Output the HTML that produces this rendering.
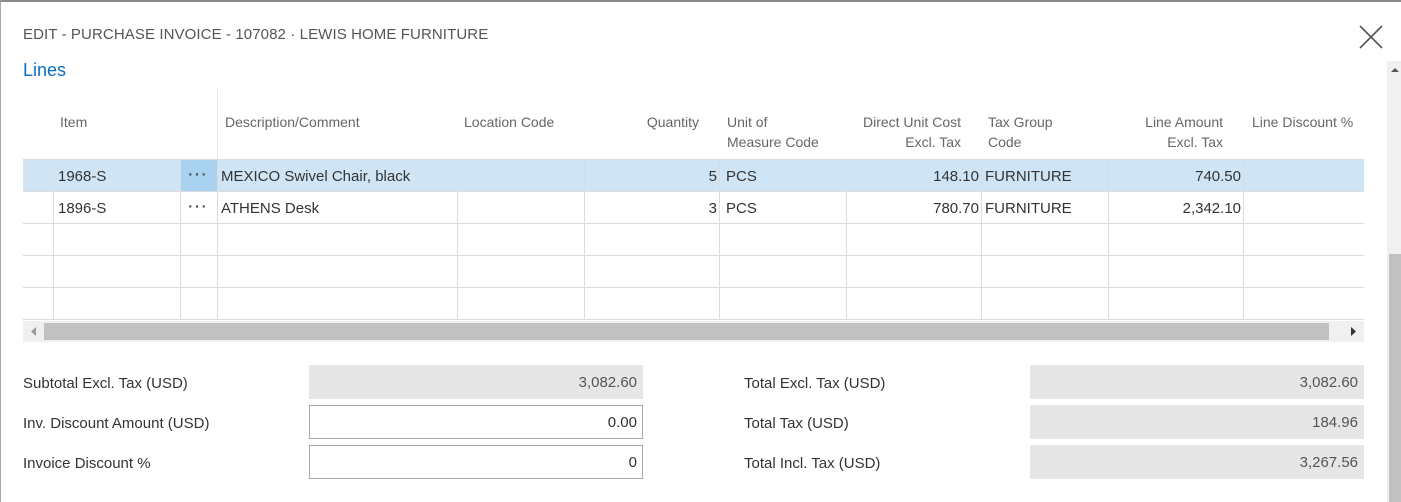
<!DOCTYPE html>
<html><head><style>
*{margin:0;padding:0;box-sizing:border-box}
body{width:1401px;height:502px;overflow:hidden;background:#fff;font-family:"Liberation Sans",sans-serif;color:#333;position:relative}
.frame{position:absolute;left:0;top:0;width:1401px;height:502px;border-top:2px solid #8a8a8a;border-left:1px solid #aaa}
.abs{position:absolute}
.title{left:23px;top:26px;font-size:15px;color:#555;letter-spacing:0.1px}
.lines{left:23px;top:60px;font-size:18px;color:#0a6fc2}
.h{position:absolute;top:112px;font-size:14px;color:#666;line-height:20px}
.cell{position:absolute;font-size:15px;color:#333;line-height:32px}
.dots{position:absolute;left:187px;font-size:20px;color:#444;line-height:32px;letter-spacing:0px}
.r{text-align:right}
.vl{position:absolute;width:1px;background:#dcdcdc}
.hl{position:absolute;left:23px;width:1341px;height:1px;background:#dcdcdc}
.lbl{position:absolute;font-size:15px;color:#333;left:23px}
.fld{position:absolute;width:334px;height:34px;font-size:15px;text-align:right;padding-right:6px;line-height:36px}
.ro{background:#e6e6e6;color:#555}
.ed{border:1px solid #a8a8a8;background:#fff;line-height:34px;padding-right:5px}
</style></head><body>
<div class="frame"></div>
<div class="abs title">EDIT - PURCHASE INVOICE - 107082 · LEWIS HOME FURNITURE</div>
<div class="abs lines">Lines</div>
<svg class="abs" style="left:1358px;top:24px" width="26" height="26"><path d="M2 2L24 24M24 2L2 24" stroke="#555" stroke-width="1.6" fill="none"/></svg>
<div class="abs" style="left:1387px;top:61px;width:14px;height:441px;background:#f0f0f0"></div>
<div class="abs" style="left:1389px;top:254px;width:12px;height:248px;background:#c1c1c1"></div>
<svg class="abs" style="left:1391px;top:67px" width="8" height="6"><path d="M0 5L4 1L8 5Z" fill="#555"/></svg>
<div class="vl" style="left:217px;top:89px;height:70px;background:#e8e8e8"></div>
<div class="h" style="left:60px">Item</div>
<div class="h" style="left:225px">Description/Comment</div>
<div class="h" style="left:464px">Location Code</div>
<div class="h r" style="left:584px;width:115px">Quantity</div>
<div class="h" style="left:727px">Unit of<br>Measure Code</div>
<div class="h r" style="left:846px;width:115px">Direct Unit Cost<br>Excl. Tax</div>
<div class="h" style="left:988px">Tax Group<br>Code</div>
<div class="h r" style="left:1108px;width:115px">Line Amount<br>Excl. Tax</div>
<div class="h" style="left:1252px">Line Discount %</div>
<div class="abs" style="left:23px;top:159px;width:1341px;height:32px;background:#cfe5f6"></div>
<div class="abs" style="left:181px;top:160px;width:36px;height:31px;background:#a9d2f1"></div>
<div class="hl" style="top:159px"></div>
<div class="hl" style="top:191px"></div>
<div class="hl" style="top:223px"></div>
<div class="hl" style="top:255px"></div>
<div class="hl" style="top:287px"></div>
<div class="hl" style="top:319px"></div>
<div class="vl" style="left:53px;top:159px;height:161px"></div>
<div class="vl" style="left:180px;top:159px;height:161px"></div>
<div class="vl" style="left:217px;top:159px;height:161px"></div>
<div class="vl" style="left:457px;top:159px;height:161px"></div>
<div class="vl" style="left:584px;top:159px;height:161px"></div>
<div class="vl" style="left:719px;top:159px;height:161px"></div>
<div class="vl" style="left:846px;top:159px;height:161px"></div>
<div class="vl" style="left:981px;top:159px;height:161px"></div>
<div class="vl" style="left:1108px;top:159px;height:161px"></div>
<div class="vl" style="left:1243px;top:159px;height:161px"></div>
<div class="cell" style="left:58px;top:161px">1968-S</div>
<div class="dots" style="top:158px">···</div>
<div class="cell" style="left:221px;top:161px">MEXICO Swivel Chair, black</div>
<div class="cell r" style="left:584px;width:133px;top:161px">5</div>
<div class="cell" style="left:726px;top:161px">PCS</div>
<div class="cell r" style="left:846px;width:133px;top:161px">148.10</div>
<div class="cell" style="left:985px;top:161px">FURNITURE</div>
<div class="cell r" style="left:1108px;width:133px;top:161px">740.50</div>
<div class="cell" style="left:58px;top:193px">1896-S</div>
<div class="dots" style="top:190px">···</div>
<div class="cell" style="left:221px;top:193px">ATHENS Desk</div>
<div class="cell r" style="left:584px;width:133px;top:193px">3</div>
<div class="cell" style="left:726px;top:193px">PCS</div>
<div class="cell r" style="left:846px;width:133px;top:193px">780.70</div>
<div class="cell" style="left:985px;top:193px">FURNITURE</div>
<div class="cell r" style="left:1108px;width:133px;top:193px">2,342.10</div>
<div class="abs" style="left:23px;top:321px;width:1341px;height:21px;background:#f0f0f0"></div>
<div class="abs" style="left:44px;top:323px;width:1285px;height:17px;background:#c1c1c1"></div>
<svg class="abs" style="left:31px;top:327px" width="6" height="9"><path d="M5 0L0 4.5L5 9Z" fill="#999"/></svg>
<svg class="abs" style="left:1351px;top:327px" width="6" height="9"><path d="M0 0L5 4.5L0 9Z" fill="#333"/></svg>
<div class="lbl" style="top:375px">Subtotal Excl. Tax (USD)</div>
<div class="lbl" style="top:415px">Inv. Discount Amount (USD)</div>
<div class="lbl" style="top:455px">Invoice Discount %</div>
<div class="fld ro" style="left:309px;top:365px">3,082.60</div>
<div class="fld ed" style="left:309px;top:405px">0.00</div>
<div class="fld ed" style="left:309px;top:445px">0</div>
<div class="lbl" style="left:744px;top:375px">Total Excl. Tax (USD)</div>
<div class="lbl" style="left:744px;top:415px">Total Tax (USD)</div>
<div class="lbl" style="left:744px;top:455px">Total Incl. Tax (USD)</div>
<div class="fld ro" style="left:1030px;top:365px">3,082.60</div>
<div class="fld ro" style="left:1030px;top:405px">184.96</div>
<div class="fld ro" style="left:1030px;top:445px">3,267.56</div>
</body></html>
